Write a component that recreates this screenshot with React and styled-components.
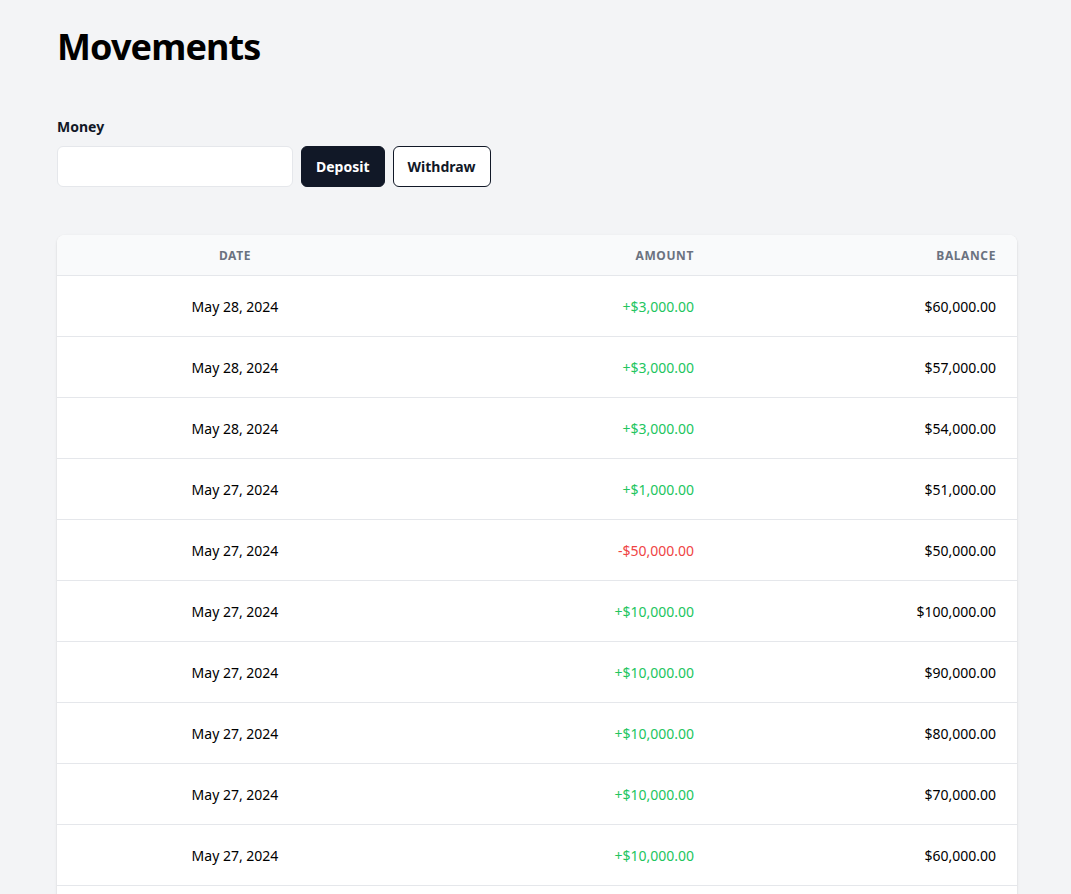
import React, { useState } from 'react';
import styled, { createGlobalStyle } from 'styled-components';

const GlobalStyle = createGlobalStyle`
  body {
    margin: 0;
    background: #f3f4f6;
    font-family: "Noto Sans", "Open Sans", sans-serif;
    color: #000;
  }
`;

const Page = styled.main`
  padding: 27px 54px 0 57px;
`;

const Title = styled.h1`
  font-size: 36px;
  line-height: 40px;
  font-weight: 700;
  margin: 0 0 50px;
  letter-spacing: -0.9px;
`;

const Label = styled.label`
  display: block;
  font-size: 14px;
  line-height: 20px;
  font-weight: 700;
  color: #111827;
  margin-bottom: 9px;
`;

const FormRow = styled.div`
  display: flex;
  align-items: center;
  gap: 8px;
`;

const Input = styled.input`
  box-sizing: border-box;
  width: 236px;
  height: 41px;
  border: 1px solid #e5e7eb;
  border-radius: 6px;
  background: #fff;
  padding: 0 12px;
  font: inherit;
  outline: none;
`;

const Button = styled.button`
  box-sizing: border-box;
  height: 41px;
  padding: 0 14px;
  border-radius: 6px;
  font-family: inherit;
  font-size: 14px;
  font-weight: 700;
  cursor: pointer;
  border: 1px solid #111827;
  background: ${p => (p.$primary ? '#111827' : '#fff')};
  color: ${p => (p.$primary ? '#fff' : '#111827')};
`;

const Table = styled.div`
  margin-top: 48px;
  width: 960px;
  background: #fff;
  border-radius: 8px 8px 0 0;
  box-shadow: 0 1px 3px rgba(0, 0, 0, 0.1), 0 1px 2px rgba(0, 0, 0, 0.06);
  overflow: hidden;
`;

const Row = styled.div`
  box-sizing: border-box;
  display: grid;
  grid-template-columns: 356px 302px 302px;
  align-items: center;
  height: ${p => (p.$head ? '41px' : '61px')};
  background: ${p => (p.$head ? '#f9fafb' : '#fff')};
  border-bottom: 1px solid #e5e7eb;
`;

const Cell = styled.div`
  padding: 0 21px;
  text-align: ${p => p.$align || 'right'};
  font-size: 14px;
  color: ${p => p.$color || '#000'};
`;

const HeadCell = styled(Cell)`
  font-size: 12px;
  font-weight: 700;
  letter-spacing: 0.6px;
  text-transform: uppercase;
  color: #6b7280;
`;

const movements = [
  { date: 'May 28, 2024', amount: 3000, balance: 60000 },
  { date: 'May 28, 2024', amount: 3000, balance: 57000 },
  { date: 'May 28, 2024', amount: 3000, balance: 54000 },
  { date: 'May 27, 2024', amount: 1000, balance: 51000 },
  { date: 'May 27, 2024', amount: -50000, balance: 50000 },
  { date: 'May 27, 2024', amount: 10000, balance: 100000 },
  { date: 'May 27, 2024', amount: 10000, balance: 90000 },
  { date: 'May 27, 2024', amount: 10000, balance: 80000 },
  { date: 'May 27, 2024', amount: 10000, balance: 70000 },
  { date: 'May 27, 2024', amount: 10000, balance: 60000 },
  { date: 'May 27, 2024', amount: 10000, balance: 50000 },
];

const fmt = n =>
  '$' + Math.abs(n).toLocaleString('en-US', { minimumFractionDigits: 2, maximumFractionDigits: 2 });

export default function App() {
  const [money, setMoney] = useState('');

  return (
    <>
      <GlobalStyle />
      <Page>
        <Title>Movements</Title>
        <Label htmlFor="money">Money</Label>
        <FormRow>
          <Input id="money" value={money} onChange={e => setMoney(e.target.value)} />
          <Button $primary>Deposit</Button>
          <Button>Withdraw</Button>
        </FormRow>

        <Table>
          <Row $head>
            <HeadCell $align="center">Date</HeadCell>
            <HeadCell>Amount</HeadCell>
            <HeadCell>Balance</HeadCell>
          </Row>
          {movements.map((m, i) => (
            <Row key={i}>
              <Cell $align="center">{m.date}</Cell>
              <Cell $color={m.amount < 0 ? '#ef4444' : '#22c55e'}>
                {(m.amount < 0 ? '-' : '+') + fmt(m.amount)}
              </Cell>
              <Cell>{fmt(m.balance)}</Cell>
            </Row>
          ))}
        </Table>
      </Page>
    </>
  );
}
